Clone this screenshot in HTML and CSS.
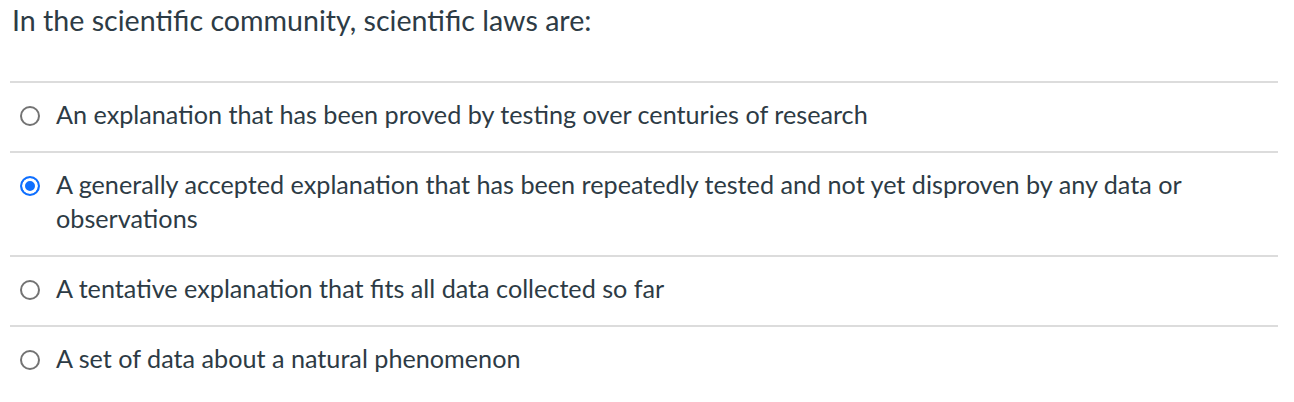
FILE: index.html
```html
<!DOCTYPE html>
<html>
<head>
<meta charset="utf-8">
<link rel="stylesheet" href="styles.css">
</head>
<body>
<div class="quiz">
  <div class="question">In the scientific community, scientific laws are:</div>
  <div class="answers">
    <label class="answer">
      <input type="radio" name="q1" class="radio">
      <span class="answer-text">An explanation that has been proved by testing over centuries of research</span>
    </label>
    <label class="answer">
      <input type="radio" name="q1" class="radio" checked>
      <span class="answer-text">A generally accepted explanation that has been repeatedly tested and not yet disproven by any data or observations</span>
    </label>
    <label class="answer">
      <input type="radio" name="q1" class="radio">
      <span class="answer-text">A tentative explanation that fits all data collected so far</span>
    </label>
    <label class="answer">
      <input type="radio" name="q1" class="radio">
      <span class="answer-text">A set of data about a natural phenomenon</span>
    </label>
  </div>
</div>
</body>
</html>
```

FILE: styles.css
```css
html, body {
  margin: 0;
  padding: 0;
  background: #ffffff;
}

.quiz {
  padding: 0 16px 0 10px;
  font-family: Lato, "Liberation Sans", sans-serif;
  color: #2d3b45;
}

.question {
  font-size: 28.6px;
  line-height: 40px;
  padding: 0 0 0 2px;
  height: 83px;
  box-sizing: border-box;
  border-bottom: 2px solid #dcdcdc;
}

.answer {
  display: flex;
  align-items: flex-start;
  gap: 16px;
  padding: 14px 0 20px 10px;
  font-size: 25.2px;
  line-height: 34px;
  border-bottom: 2px solid #dcdcdc;
}

.answer:last-child {
  border-bottom: none;
}

.radio {
  appearance: none;
  -webkit-appearance: none;
  box-sizing: border-box;
  width: 20px;
  height: 20px;
  margin: 9px 0 0 0;
  border: 2px solid #737373;
  border-radius: 50%;
  background: #ffffff;
  flex: none;
}

.radio:checked {
  border-color: #0f6fff;
  background: #0f6fff;
  box-shadow: inset 0 0 0 3px #ffffff;
}

.answer-text {
  flex: 1;
}
```
